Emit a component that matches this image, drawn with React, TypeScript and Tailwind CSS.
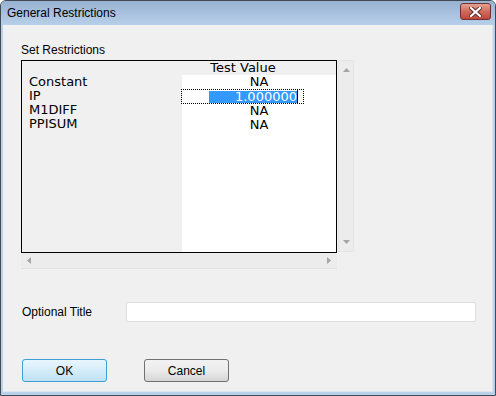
import React from 'react'

const rows = [
  { name: 'Constant', value: 'NA' },
  { name: 'IP', value: '1.000000' },
  { name: 'M1DIFF', value: 'NA' },
  { name: 'PPISUM', value: 'NA' },
]

const ui = { fontFamily: '"Liberation Sans", Arial, sans-serif' }
const grid = { fontFamily: '"DejaVu Sans", Verdana, sans-serif' }

const Arrow: React.FC<{ dir: 'up' | 'down' | 'left' | 'right' }> = ({ dir }) => {
  const pts = {
    up: '0,4 7,4 3.5,0',
    down: '0,0 7,0 3.5,4',
    left: '4,0 4,7 0,3.5',
    right: '0,0 0,7 4,3.5',
  }[dir]
  const vertical = dir === 'up' || dir === 'down'
  return (
    <svg width={vertical ? 7 : 4} height={vertical ? 4 : 7} className="block">
      <polygon points={pts} fill="#a4a4a4" />
    </svg>
  )
}

export default function App() {
  return (
    <div
      className="w-[496px] h-[396px] flex flex-col border border-[#3f4a57] rounded-t-[6px] bg-[#b9d1ea] overflow-hidden"
      style={ui}
    >
      {/* title bar */}
      <div className="h-[24px] flex items-center justify-between pl-[6px] pr-[4px] bg-gradient-to-b from-[#98b2d2] to-[#b7cfe9]">
        <span className="text-[12px] text-black">General Restrictions</span>
        <div className="w-[31px] h-[17px] mt-[-3px] flex items-center justify-center rounded-[3px] border border-[#6e3030] bg-gradient-to-b from-[#e3a394] via-[#d06b5b] to-[#c0463a]">
          <svg width="13" height="10" viewBox="0 0 13 10">
            <path d="M2 1 L11 9 M11 1 L2 9" stroke="#5a2a2a" strokeWidth="4" strokeLinecap="square" />
            <path d="M2 1 L11 9 M11 1 L2 9" stroke="#ffffff" strokeWidth="2.2" strokeLinecap="square" />
          </svg>
        </div>
      </div>

      {/* client area */}
      <div className="flex-1 mx-[2px] mb-[3px] bg-[#f0f0f0] border-b border-r border-[#dfe6ee] flex flex-col pl-[18px] pt-[18px]">
        <div className="text-[12px] leading-[14px] text-black">Set Restrictions</div>

        <div className="flex mt-[3px]">
          {/* grid */}
          <div className="w-[316px] h-[193px] border border-black bg-[#f0f0f0] flex flex-col text-[13px] leading-[14px] text-black" style={grid}>
            <div className="h-[14px] flex">
              <div className="w-[160px]" />
              <div className="w-[122px] text-center">Test Value</div>
            </div>
            <div className="flex-1 flex">
              <div className="w-[160px] pl-[7px]">
                {rows.map((r) => (
                  <div key={r.name} className="h-[14px]">{r.name}</div>
                ))}
              </div>
              <div className="flex-1 bg-white">
                {rows.map((r, i) =>
                  i === 1 ? (
                    <div key={r.name} className="h-[15px] -ml-px w-[123px] border border-dotted border-black flex items-center justify-end pr-[5px]">
                      <span className="w-[88px] h-[12px] bg-[#3399ff] text-white text-right leading-[12px]">{r.value}</span>
                      <span className="w-px h-[13px] bg-black" />
                    </div>
                  ) : (
                    <div key={r.name} className="h-[14px] text-center">{r.value}</div>
                  )
                )}
              </div>
            </div>
          </div>

          {/* vertical scrollbar */}
          <div className="ml-[1px] w-[16px] h-[192px] bg-[#ececec] border border-[#e4e4e4] flex flex-col items-center justify-between py-[7px]">
            <Arrow dir="up" />
            <Arrow dir="down" />
          </div>
        </div>

        {/* horizontal scrollbar */}
        <div className="w-[316px] h-[16px] bg-[#ececec] border-b border-[#e0e0e0] flex items-center justify-between px-[6px]">
          <Arrow dir="left" />
          <Arrow dir="right" />
        </div>

        <div className="flex items-center mt-[33px] h-[20px]">
          <div className="w-[105px] text-[12px] pl-px">Optional Title</div>
          <div className="w-[350px] h-[20px] bg-white border border-[#dedede] rounded-[2px]" />
        </div>

        <div className="flex mt-[37px] gap-[37px] pl-px">
          <button className="w-[85px] h-[23px] rounded-[3px] border border-[#3c9fd6] bg-gradient-to-b from-[#eaf6fd] to-[#bfe2f5] text-[12px] text-black">
            OK
          </button>
          <button className="w-[85px] h-[23px] rounded-[3px] border border-[#707070] bg-gradient-to-b from-[#f2f2f2] via-[#ebebeb] to-[#d6d6d6] text-[12px] text-black">
            Cancel
          </button>
        </div>
      </div>
    </div>
  )
}
